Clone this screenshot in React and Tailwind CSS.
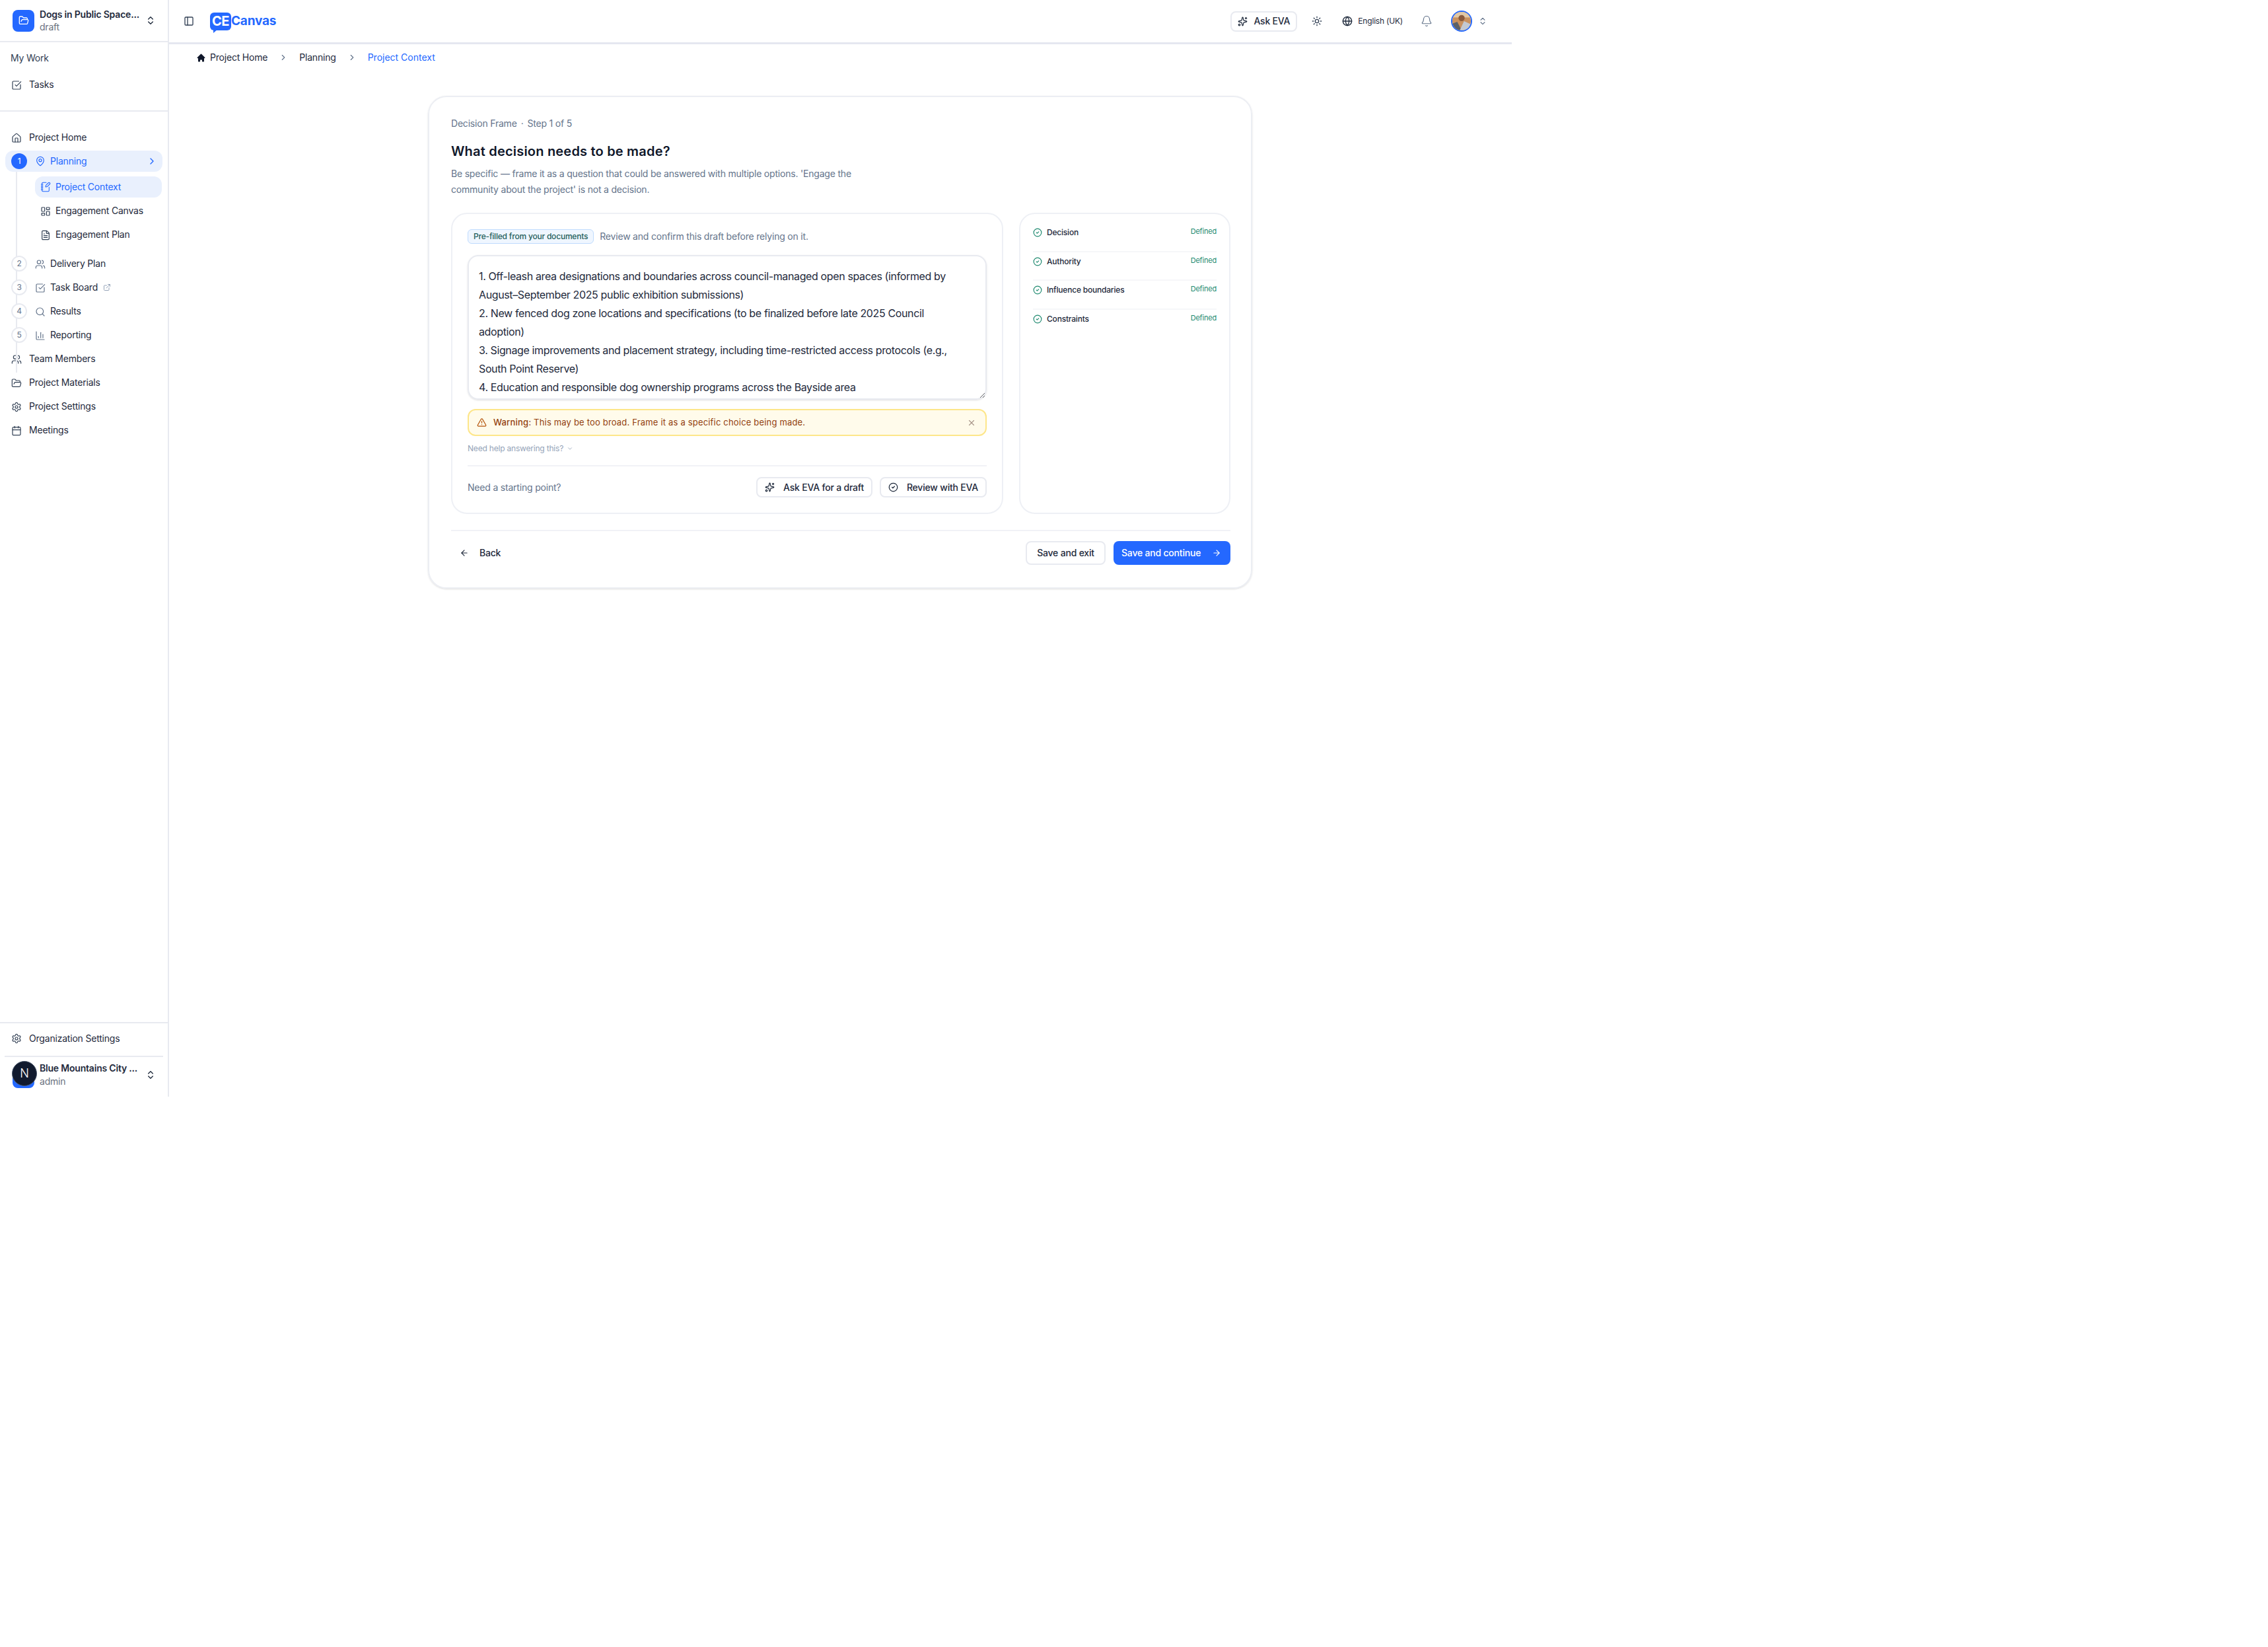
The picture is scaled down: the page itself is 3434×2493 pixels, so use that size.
import {
  ArrowLeft, ArrowRight, Bell, Calendar, ChartColumn, ChevronDown, ChevronRight, ChevronsUpDown,
  CircleCheck, ExternalLink, FileText, FolderOpen, Globe, House, LayoutDashboard, MapPin,
  NotebookPen, PanelLeft, Search, Settings, Sparkles, SquareCheckBig, Sun, TriangleAlert, Users, X,
} from "lucide-react";
import { HiHome } from "react-icons/hi";

const draft = `1. Off-leash area designations and boundaries across council-managed open spaces (informed by August–September 2025 public exhibition submissions)
2. New fenced dog zone locations and specifications (to be finalized before late 2025 Council adoption)
3. Signage improvements and placement strategy, including time-restricted access protocols (e.g., South Point Reserve)
4. Education and responsible dog ownership programs across the Bayside area`;

const steps = [
  { n: 2, label: "Delivery Plan", icon: Users },
  { n: 3, label: "Task Board", icon: SquareCheckBig, external: true },
  { n: 4, label: "Results", icon: Search },
  { n: 5, label: "Reporting", icon: ChartColumn },
];

const frames = ["Decision", "Authority", "Influence boundaries", "Constraints"];

function NavRow({ icon: Icon, label }) {
  return (
    <div className="flex h-9 items-center pl-[17px] text-[#1e293b]">
      <Icon size={16} strokeWidth={1.8} className="mt-[2px] text-[#334155]" />
      <span className="ml-[11px]">{label}</span>
    </div>
  );
}

function Sidebar() {
  return (
    <aside className="flex w-[256px] shrink-0 flex-col border-r-2 border-[#e8eaf0] text-sm">
      <div className="flex h-[64px] items-center border-b-2 border-[#e8eaf0] pl-[19px] pr-[18px]">
        <div className="flex size-[33px] items-center justify-center rounded-lg bg-[#2468ff] text-white">
          <FolderOpen size={16} />
        </div>
        <div className="ml-2 flex-1 leading-[19px]">
          <div className="font-semibold text-[#1e293b]">Dogs in Public Space...</div>
          <div className="text-[#6b7280]">draft</div>
        </div>
        <ChevronsUpDown size={16} className="text-[#1e293b]" />
      </div>

      <div className="h-[105px] border-b-2 border-[#e8eaf0] text-[#1e293b]">
        <div className="flex h-[46px] items-end pb-[12px] pl-4 text-[#334155]">My Work</div>
        <NavRow icon={SquareCheckBig} label="Tasks" />
      </div>

      <nav className="relative flex-1 pt-[21px]">
        <div className="absolute left-[24px] top-[87px] h-[308px] w-[2px] bg-[#e8eaf0]" />
        <NavRow icon={House} label="Project Home" />

        <div className="relative flex h-9 items-center">
          <div className="mx-2 flex h-8 w-[238px] items-center rounded-xl bg-[#e9f0fd] pl-[9px] pr-[8px] text-[#2468ff]">
            <span className="flex size-6 items-center justify-center rounded-full bg-[#2468ff] text-xs text-white">1</span>
            <MapPin size={16} strokeWidth={1.8} className="ml-[12px]" />
            <span className="ml-[7px] flex-1">Planning</span>
            <ChevronRight size={16} />
          </div>
        </div>

        <div className="relative ml-[53px] mr-[9px] mt-[3px]">
          <div className="flex h-9 items-center">
            <div className="flex h-8 w-full items-center rounded-xl bg-[#e9f0fd] pl-2 text-[#2468ff]">
              <NotebookPen size={16} strokeWidth={1.6} />
              <span className="ml-[7px]">Project Context</span>
            </div>
          </div>
          <div className="flex h-9 items-center pl-2 text-[#1e293b]">
            <LayoutDashboard size={16} strokeWidth={1.8} className="mt-[2px] text-[#334155]" />
            <span className="ml-[7px]">Engagement Canvas</span>
          </div>
          <div className="flex h-9 items-center pl-2 text-[#1e293b]">
            <FileText size={16} strokeWidth={1.8} className="mt-[2px] text-[#334155]" />
            <span className="ml-[7px]">Engagement Plan</span>
          </div>
        </div>

        <div className="mt-[8px]">
          {steps.map((s) => (
            <div key={s.n} className="relative flex h-9 items-center pl-[17px] text-[#1e293b]">
              <span className="flex size-6 items-center justify-center rounded-full border-2 border-[#e8eaf0] bg-white text-xs text-[#64748b]">{s.n}</span>
              <s.icon size={16} strokeWidth={1.8} className="ml-[12px] mt-[2px] text-[#64748b]" />
              <span className="ml-[7px]">{s.label}</span>
              {s.external && <ExternalLink size={12} className="ml-2 text-[#94a3b8]" />}
            </div>
          ))}
        </div>

        <NavRow icon={Users} label="Team Members" />
        <NavRow icon={FolderOpen} label="Project Materials" />
        <NavRow icon={Settings} label="Project Settings" />
        <NavRow icon={Calendar} label="Meetings" />
      </nav>

      <div className="border-t-2 border-[#e8eaf0]">
        <div className="flex h-[49px] items-center pb-[4px] pl-[17px] text-[#1e293b]">
          <Settings size={16} strokeWidth={1.8} className="text-[#334155]" />
          <span className="ml-[11px]">Organization Settings</span>
        </div>
        <div className="mx-[7px] flex h-[62px] items-center border-t-2 border-[#e8eaf0] pb-[6px] pl-[12px] pr-[11px]">
          <div className="relative mt-[6px] size-[33px] rounded-lg bg-[#2468ff]">
            <div className="absolute -left-[1px] -top-[8px] flex size-[38px] items-center justify-center rounded-full border border-[#475569] bg-[#111a2e] text-lg font-light text-white">N</div>
          </div>
          <div className="ml-2 flex-1 leading-[20px]">
            <div className="font-semibold text-[#1e293b]">Blue Mountains City ...</div>
            <div className="text-[#6b7280]">admin</div>
          </div>
          <ChevronsUpDown size={16} className="text-[#1e293b]" />
        </div>
      </div>
    </aside>
  );
}

function Header() {
  return (
    <header className="flex h-[67px] items-center border-b-[3px] border-[#e5e7f0] pl-[22px] pr-[37px]">
      <PanelLeft size={16} className="text-[#334155]" />
      <div className="ml-[24px] flex items-center">
        <div className="relative flex h-[27px] w-[32px] items-center justify-center rounded-md bg-[#2468ff] text-[20px] font-bold leading-none tracking-[-0.5px] text-white">
          CE
          <div className="absolute -bottom-[4px] left-[5px] size-0 border-r-[7px] border-t-[6px] border-r-transparent border-t-[#2468ff]" />
        </div>
        <span className="text-[19px] font-bold text-[#2468ff]">Canvas</span>
      </div>

      <div className="ml-auto flex items-center text-[#1e293b]">
        <button className="flex h-[31px] w-[101px] items-center justify-center gap-[9px] rounded-lg border-2 border-[#e8eaf0] text-sm font-medium">
          <Sparkles size={15} />
          Ask EVA
        </button>
        <Sun size={16} className="ml-[22px] text-[#334155]" />
        <Globe size={16} className="ml-[30px]" />
        <span className="ml-[8px] text-xs">English (UK)</span>
        <Bell size={18} strokeWidth={1.6} className="ml-[27px] text-[#64748b]" />
        <svg viewBox="0 0 30 30" className="ml-[28px] size-[32px] rounded-full border-2 border-[#2468ff]">
          <rect width="30" height="30" fill="#c9915f" />
          <rect y="0" width="30" height="9" fill="#e0c8a5" />
          <circle cx="15" cy="10" r="5" fill="#8a5a3c" />
          <path d="M0 30 V19 L8 16 L15 30Z" fill="#5b6069" />
          <path d="M12 30 L19 15 L30 20 V30Z" fill="#c3c9d2" />
        </svg>
        <ChevronsUpDown size={14} className="ml-[9px] text-[#64748b]" />
      </div>
    </header>
  );
}

function Breadcrumb() {
  return (
    <div className="flex h-[40px] items-center pl-[41px] text-sm text-[#1e293b]">
      <HiHome size={15} className="text-[#0f172a]" />
      <span className="ml-[6px]">Project Home</span>
      <ChevronRight size={14} className="mx-[17px] text-[#64748b]" />
      <span>Planning</span>
      <ChevronRight size={14} className="mx-[17px] text-[#64748b]" />
      <span className="tracking-normal text-[#2468ff]">Project Context</span>
    </div>
  );
}

function SecondaryButton({ icon: Icon, label, className }) {
  return (
    <button className={`flex h-[31px] items-center justify-center gap-[13px] rounded-lg border-2 border-[#e8eaf0] bg-white text-sm font-medium text-[#1e293b] ${className}`}>
      <Icon size={15} />
      {label}
    </button>
  );
}

function DecisionCard() {
  return (
    <section className="ml-[392px] mt-[38px] flex h-[746px] w-[1248px] flex-col rounded-[28px] border-2 border-[#eceef3] pl-[33px] pr-[31px] pt-[30px] shadow-sm">
      <div className="text-sm leading-5 text-[#64748b]">
        Decision Frame<span className="mx-[6px]">·</span>Step 1 of 5
      </div>
      <h1 className="mt-[18px] text-xl font-semibold leading-7 tracking-[0.2px] text-[#0f172a]">What decision needs to be made?</h1>
      <p className="mt-[8px] w-[640px] text-sm leading-6 text-[#64748b]">
        Be specific — frame it as a question that could be answered with multiple options. 'Engage the community about the project' is not a decision.
      </p>

      <div className="mt-[23px] flex h-[458px] gap-[24px]">
        <div className="flex w-[836px] flex-col rounded-[24px] border-2 border-[#eef0f5] px-[23px] pt-[23px]">
          <div className="flex items-center">
            <span className="flex h-[22px] items-center rounded-md border border-[#bfdbfe] bg-[#eff6ff] px-2 text-xs font-medium text-[#1f5f5b]">Pre-filled from your documents</span>
            <span className="ml-[9px] text-sm text-[#64748b]">Review and confirm this draft before relying on it.</span>
          </div>
          <textarea
            readOnly
            value={draft}
            className="mt-[17px] h-[219px] w-full resize-y overflow-hidden rounded-2xl border-2 border-[#e8eaf0] py-[16px] pl-[15px] pr-[40px] text-base leading-7 tracking-[-0.37px] text-[#1e293b] shadow-sm outline-none"
          />
          <div className="mt-[14px] flex h-[41px] items-center rounded-xl border-2 border-[#fde68a] bg-[#fffbeb] pl-[12px] pr-[14px] text-[13px] tracking-[0.18px] text-[#92400e]">
            <TriangleAlert size={15} className="text-[#b45309]" />
            <span className="ml-[10px] flex-1"><span className="font-medium">Warning:</span> This may be too broad. Frame it as a specific choice being made.</span>
            <X size={14} className="text-[#a8968a]" />
          </div>
          <div className="mt-[11px] flex items-center text-xs text-[#94a3b8]">
            Need help answering this?
            <ChevronDown size={10} className="ml-[5px]" />
          </div>
          <div className="mt-[17px] flex items-center border-t-2 border-[#f1f2f6] pt-[16px]">
            <span className="text-sm text-[#64748b]">Need a starting point?</span>
            <div className="ml-auto flex gap-[11px]">
              <SecondaryButton icon={Sparkles} label="Ask EVA for a draft" className="w-[176px]" />
              <SecondaryButton icon={CircleCheck} label="Review with EVA" className="w-[162px]" />
            </div>
          </div>
        </div>

        <div className="flex w-[320px] flex-col rounded-[24px] border-2 border-[#eef0f5] px-[19px] pt-[18px]">
          {frames.map((f, i) => (
            <div key={f} className={`flex h-[43.5px] items-start justify-between pt-[2px] ${i < 3 ? "border-b-2 border-[#f6f7f9]" : ""}`} style={{ marginTop: i ? 0 : -4 }}>
              <div className="flex items-center pt-[4px] text-xs font-medium text-[#1e293b]">
                <CircleCheck size={14} className="text-[#1f8a70]" />
                <span className="ml-[7px]">{f}</span>
              </div>
              <span className="pt-[2px] text-[11px] text-[#1f8a70]">Defined</span>
            </div>
          ))}
        </div>
      </div>

      <div className="mt-[24px] flex h-[87px] items-start border-t-2 border-[#f1f2f6] pt-[15px]">
        <button className="flex h-9 items-center pl-[13px] text-sm font-medium text-[#1e293b]">
          <ArrowLeft size={14} />
          <span className="ml-[16px]">Back</span>
        </button>
        <div className="ml-auto flex gap-[12px]">
          <button className="h-9 w-[121px] rounded-lg border-2 border-[#e8eaf0] bg-white text-sm font-medium text-[#1e293b]">Save and exit</button>
          <button className="flex h-9 w-[177px] items-center justify-between rounded-lg bg-[#2468ff] pl-[12px] pr-[14px] text-sm font-medium text-white">
            Save and continue
            <ArrowRight size={14} />
          </button>
        </div>
      </div>
    </section>
  );
}

export default function App() {
  return (
    <div className="flex h-[1660px] w-[2289px] bg-white font-[Inter,sans-serif] tracking-[-0.2px]">
      <Sidebar />
      <main className="flex-1">
        <Header />
        <Breadcrumb />
        <DecisionCard />
      </main>
    </div>
  );
}
